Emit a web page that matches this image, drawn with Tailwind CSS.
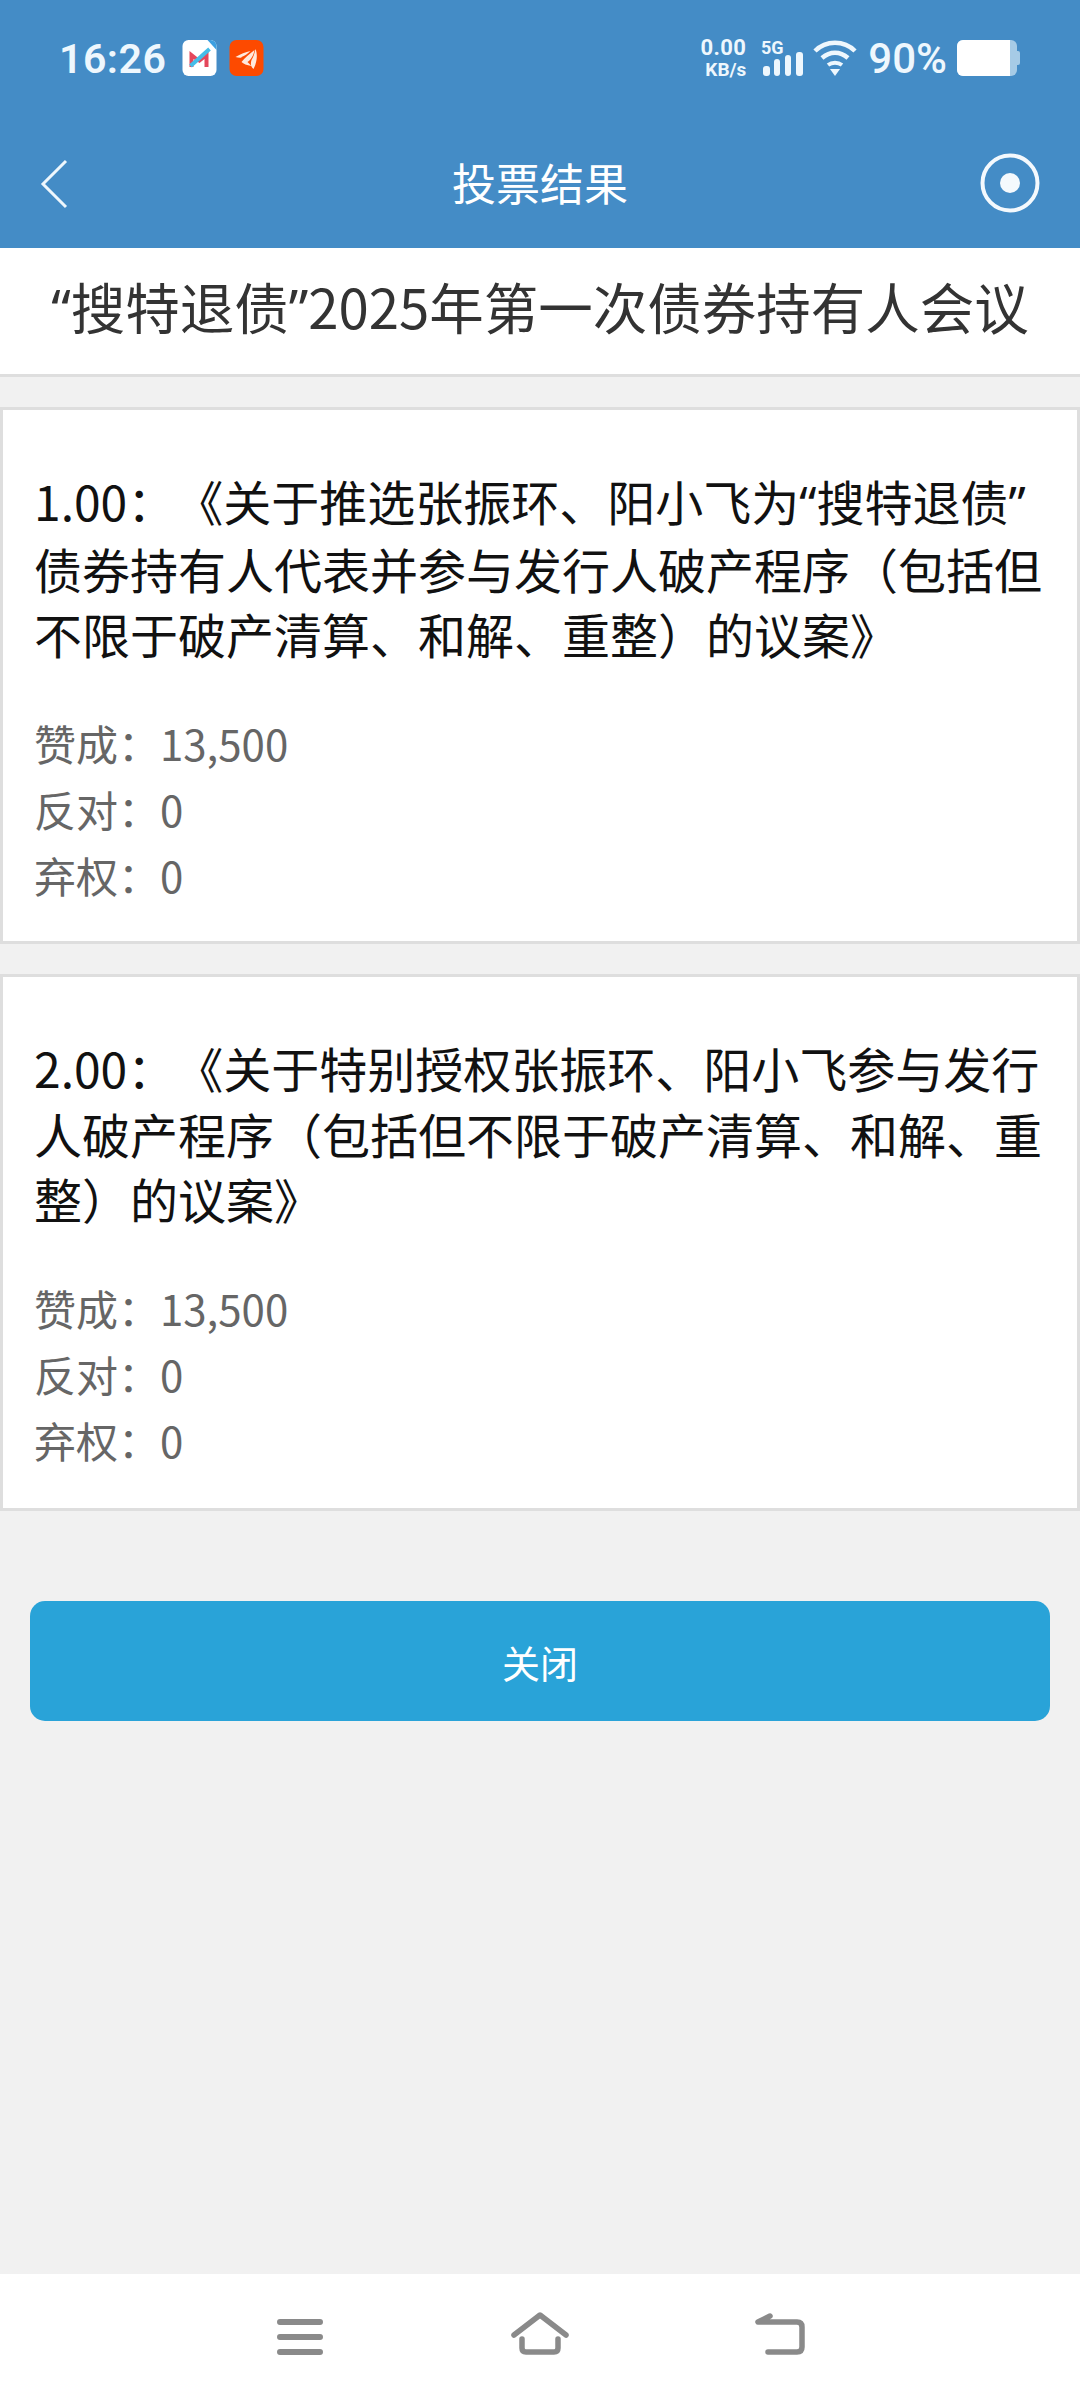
<!DOCTYPE html>
<html lang="zh-CN">
<head>
  <meta charset="utf-8"/>
  <meta content="width=device-width, initial-scale=1" name="viewport"/>
  <title>投票结果</title>
  <script src="https://cdn.jsdelivr.net/npm/@tailwindcss/browser@4"></script>
</head>
<body class="w-[1080px] h-[2400px] bg-[#f1f1f1] flex flex-col overflow-hidden font-['Noto_Sans_CJK_SC',sans-serif] [text-spacing-trim:space-all]">
  <!-- 顶部 -->
  <header class="h-[248px] bg-[#448cc6] text-white shrink-0">
    <div class="h-[116px] pl-[59px] pr-[60px] flex items-center justify-between">
      <div class="flex items-center">
        <span class="font-['Roboto',sans-serif] font-semibold text-[41px] leading-none text-[#eef7fd] tracking-[0.5px] mt-[2px]">16:26</span>
        <svg class="ml-[16px]" width="35" height="36" viewBox="0 0 34 36">
          <rect width="34" height="36" rx="6" fill="#fff"/>
          <path d="M7 27V11l10 8 9-8v16h-4v-8l-5 4-6-4v8z" fill="#e4475b"/>
          <path d="M8 26 27 9" stroke="#45bde8" stroke-width="4"/>
          <path d="M25 0h3a6 6 0 0 1 6 6v4z" fill="#3c9fe0"/>
        </svg>
        <svg class="ml-[12px]" width="35" height="36" viewBox="0 0 34 36">
          <rect width="34" height="36" rx="7" fill="#fd4a00"/>
          <path d="M6 17c5-3 10-5 15-6-3 3-6 5-9 6 1 1-3 1-6 0zM12 22c3-4 8-8 13-12-1 6-4 10-7 12l4 4c-5-1-8-2-10-4zM26 9c2 5 2 12-2 20-3-2-3-6-2-9 2-3 3-7 4-11z" fill="#ffe9dc"/>
        </svg>
      </div>
      <div class="flex items-center text-[#eef7fd]">
        <div class="flex flex-col items-end w-[46px] font-['Roboto',sans-serif] font-bold leading-none mr-[15px]">
          <span class="text-[22px] leading-[22px] tracking-[0.4px]">0.00</span>
          <span class="text-[19px] leading-[19px] mt-[1px]">KB/s</span>
        </div>
        <svg width="42" height="36" viewBox="0 0 42 36" fill="currentColor">
          <text x="0" y="14" font-family="Roboto" font-weight="700" font-size="18">5G</text>
          <rect x="2" y="26" width="7" height="10" rx="3"/>
          <rect x="13" y="19" width="6" height="17" rx="3"/>
          <rect x="24" y="15" width="6" height="21" rx="3"/>
          <rect x="35" y="12" width="7" height="24" rx="3"/>
        </svg>
        <svg class="ml-[10px]" width="44" height="36" viewBox="0 0 44 36" fill="none" stroke="currentColor" stroke-width="4.5">
          <path d="M2 11C13 0 31 0 42 11"/>
          <path d="M9 18c8-7 18-7 26 0"/>
          <path d="M15 25c4-3 10-3 14 0" stroke-width="4"/>
          <path d="M17 29h10l-5 7z" fill="currentColor" stroke="none"/>
        </svg>
        <span class="ml-[11px] font-['Roboto',sans-serif] font-medium text-[42px] leading-none mt-[2px]">90%</span>
        <div class="ml-[10px] flex items-center">
          <div class="w-[60px] h-[36px] rounded-[6px] bg-[#a6cbe6] overflow-hidden">
            <div class="w-[53px] h-full bg-white"></div>
          </div>
          <div class="w-[3px] h-[14px] rounded-r-[2px] bg-[#a6cbe6]"></div>
        </div>
      </div>
    </div>
    <div class="relative h-[132px] flex items-center justify-center">
      <svg class="absolute left-[40px] top-[43px]" width="28" height="50" viewBox="0 0 28 50" fill="none" stroke="#eef7fd" stroke-width="3">
        <path d="M26 2 3 25l23 23"/>
      </svg>
      <h1 class="text-[44px] leading-none font-normal">投票结果</h1>
      <svg class="absolute left-[980px] top-[37px]" width="60" height="60" viewBox="0 0 60 60" fill="none">
        <circle cx="30" cy="30" r="27.5" stroke="#f4f9fd" stroke-width="4"/>
        <circle cx="30" cy="30" r="10" fill="#f4f9fd"/>
      </svg>
    </div>
  </header>

  <div class="h-[129px] shrink-0 bg-white border-b-[3px] border-[#dedede] flex items-center justify-center">
    <h2 class="text-[54.5px] leading-none font-normal text-[#333] -mt-[7px]"><span class="font-['Noto_Sans']">“</span>搜特退债<span class="font-['Noto_Sans']">”</span>2025年第一次债券持有人会议</h2>
  </div>

  <!-- 议案 -->
  <main class="flex-1 pt-[30px]">
    <section class="h-[537px] bg-white border-[3px] border-[#dedede] pt-[58px] pl-[31px] pr-[30px]">
      <p class="text-[48px] leading-[65.5px] text-[#111]">1.00：《关于推选张振环、阳小飞为<span class="font-['Noto_Sans']">“</span>搜特退债<span class="font-['Noto_Sans']">”</span>债券持有人代表并参与发行人破产程序（包括但不限于破产清算、和解、重整）的议案》</p>
      <ul class="mt-[43px] text-[42px] leading-[66px] text-[#666]">
        <li>赞成：13,500</li>
        <li>反对：0</li>
        <li>弃权：0</li>
      </ul>
    </section>
    <section class="mt-[30px] h-[537px] bg-white border-[3px] border-[#dedede] pt-[58px] pl-[31px] pr-[30px]">
      <p class="text-[48px] leading-[65.5px] text-[#111]">2.00：《关于特别授权张振环、阳小飞参与发行人破产程序（包括但不限于破产清算、和解、重整）的议案》</p>
      <ul class="mt-[43px] text-[42px] leading-[66px] text-[#666]">
        <li>赞成：13,500</li>
        <li>反对：0</li>
        <li>弃权：0</li>
      </ul>
    </section>
    <div class="px-[30px] mt-[90px]">
      <button class="w-full h-[120px] rounded-[15px] bg-[#29a3d8] text-white text-[38px]">关闭</button>
    </div>
  </main>

  <!-- 系统导航 -->
  <nav class="h-[126px] shrink-0 bg-white pt-[38px] pl-[277px] flex items-start">
    <svg width="46" height="46" viewBox="0 0 46 46" fill="none" stroke="#8a8a8a" stroke-width="6" stroke-linecap="round">
      <path d="M3 10h40M3 25h40M3 40h40"/>
    </svg>
    <svg class="ml-[188px]" width="58" height="46" viewBox="0 0 58 46" fill="none" stroke="#8a8a8a" stroke-linecap="round" stroke-linejoin="round">
      <path d="M3 23 29 3l26 20" stroke-width="5.5"/>
      <path d="M11 27v9q0 4 4 4h28q4 0 4-4v-9" stroke-width="5.5"/>
    </svg>
    <svg class="ml-[186px]" width="50" height="46" viewBox="0 0 50 46" fill="none" stroke="#8a8a8a" stroke-linecap="round" stroke-linejoin="round" stroke-width="5.5">
      <path d="M15 4 3 10h39q5 0 5 5v20q0 5-5 5H13"/>
    </svg>
  </nav>
</body>
</html>
